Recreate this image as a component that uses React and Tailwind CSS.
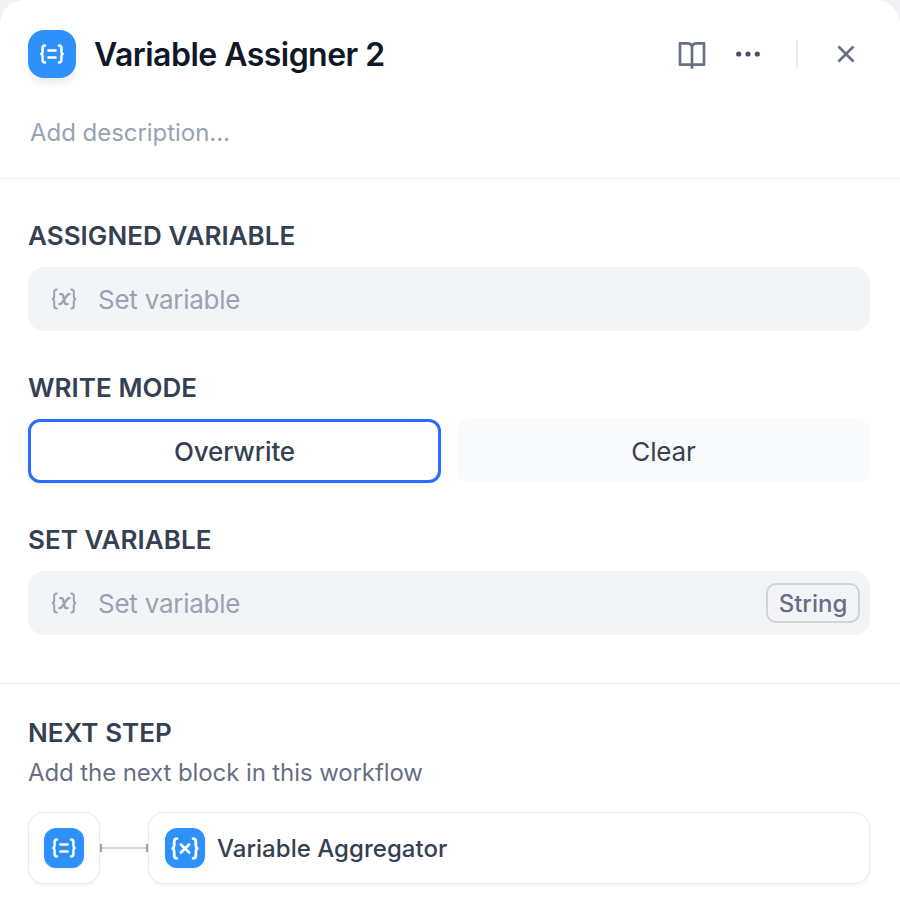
import { RiBookOpenLine, RiCloseLine } from 'react-icons/ri';

function Braces() {
  return (
    <g>
      <path d="M5 1.5C3.4 1.5 2.6 2.3 2.6 4v3.2c0 1.5-.4 2.3-1.3 2.8.9.5 1.3 1.3 1.3 2.8V16c0 1.7.8 2.5 2.4 2.5" />
      <path d="M19 1.5c1.6 0 2.4.8 2.4 2.5v3.2c0 1.5.4 2.3 1.3 2.8-.9.5-1.3 1.3-1.3 2.8V16c0 1.7-.8 2.5-2.4 2.5" />
    </g>
  );
}

function AssignIcon() {
  return (
    <svg width="24" height="20" viewBox="0 0 24 20" fill="none" stroke="#fff" strokeWidth="2.5" strokeLinecap="round" strokeLinejoin="round">
      <Braces />
      <path d="M8.4 6.6h7.2M8.4 13.4h7.2" />
    </svg>
  );
}

function AggregateIcon() {
  return (
    <svg width="28" height="23" viewBox="0 0 24 20" fill="none" stroke="#fff" strokeWidth="2.4" strokeLinecap="round" strokeLinejoin="round">
      <Braces />
      <path d="M8.4 6.5l7.2 7M15.6 6.5l-7.2 7" />
    </svg>
  );
}

function VariableIcon() {
  return (
    <svg width="26" height="22" viewBox="0 0 26 22" fill="none" stroke="#98a2b2" strokeWidth="2" strokeLinecap="round" strokeLinejoin="round">
      <path d="M5.7 1.4C3.9 1.4 3.2 2.2 3.2 3.9v4.3c0 1.5-.4 2.3-1.6 2.8 1.2.5 1.6 1.3 1.6 2.8v4.3c0 1.7.7 2.5 2.5 2.5" />
      <path d="M20.3 1.4c1.8 0 2.5.8 2.5 2.5v4.3c0 1.5.4 2.3 1.6 2.8-1.2.5-1.6 1.3-1.6 2.8v4.3c0 1.7-.7 2.5-2.5 2.5" />
      <path strokeWidth="2.3" d="M9.3 6.2h1.3c.8 0 1.2.3 1.4 1l1.9 7.9c.2.7.6 1 1.3 1h1.4M18.6 6.2h-.4c-.8 0-1.4.3-1.9.9l-5.6 8c-.5.7-1.1 1-1.9 1h-.4" />
    </svg>
  );
}

function VariableField({ type }) {
  return (
    <div className="mt-[15px] flex h-16 items-center rounded-[16px] bg-[#f2f4f8] pl-[23px] pr-[10px]">
      <VariableIcon />
      <span className="ml-[21px] pt-[2px] text-[26px] leading-8 tracking-[-0.25px] text-[#98a2b2]">Set variable</span>
      {type && (
        <span className="ml-auto flex h-10 w-[94px] items-center justify-center rounded-[10px] border-2 border-[#d0d3da] pt-[2px] text-[24px] font-medium text-[#676f83]">
          {type}
        </span>
      )}
    </div>
  );
}

function Heading({ children }) {
  return <h2 className="text-[26px] font-semibold leading-8 tracking-[0.05px] text-[#354052]">{children}</h2>;
}

export default function App() {
  return (
    <div className="h-[918px] w-[900px] overflow-hidden bg-[#f0f1f5] font-['Inter',sans-serif]">
      <main className="flex h-[940px] flex-col rounded-t-[24px] bg-white">
        <header className="h-[179px] border-b border-[#eff0f2] pt-[30px]">
          <div className="flex h-12 items-center pl-7 pr-[38px]">
            <div className="flex size-12 items-center justify-center rounded-[16px] bg-[#2e90fa] shadow-[0_6px_10px_-2px_rgba(16,24,40,0.1)]">
              <AssignIcon />
            </div>
            <h1 className="ml-[18px] whitespace-nowrap pt-[2px] text-[32px] font-semibold leading-10 tracking-[-0.53px] text-[#101828]">Variable Assigner 2</h1>
            <div className="ml-auto flex items-center">
              <RiBookOpenLine className="size-8 text-[#676f83]" />
              <svg className="ml-6" width="32" height="32" viewBox="0 0 32 32" fill="#475467">
                <circle cx="6.7" cy="16" r="2.6" />
                <circle cx="16" cy="16" r="2.6" />
                <circle cx="25.3" cy="16" r="2.6" />
              </svg>
              <div className="ml-8 h-7 w-[2px] bg-[#ebecee]" />
              <RiCloseLine className="ml-8 size-8 text-[#676f83]" />
            </div>
          </div>
          <p className="ml-[30px] mt-[39px] text-[24px] leading-8 tracking-[-0.04px] text-[#98a2b2]">Add description...</p>
        </header>

        <section className="h-[505px] border-b border-[#eff0f2] pl-7 pr-[30px] pt-[41px]">
          <Heading>ASSIGNED VARIABLE</Heading>
          <VariableField />
          <div className="mt-[41px]">
            <Heading>WRITE MODE</Heading>
            <div className="mt-[15px] grid grid-cols-2 gap-4 text-[26px] tracking-[-0.15px] text-[#354052]">
              <button className="h-16 rounded-[12px] border-3 border-[#296dff] bg-white pt-px font-medium shadow-[0_2px_4px_rgba(16,24,40,0.05)]">Overwrite</button>
              <button className="h-16 rounded-[12px] bg-[#f9fafb] pt-px">Clear</button>
            </div>
          </div>
          <div className="mt-[41px]">
            <Heading>SET VARIABLE</Heading>
            <VariableField type="String" />
          </div>
        </section>

        <section className="pl-7 pr-[30px] pt-[33px]">
          <Heading>NEXT STEP</Heading>
          <p className="mt-2 text-[24px] leading-8 tracking-[-0.1px] text-[#676f83]">Add the next block in this workflow</p>
          <div className="mt-[23px] flex items-center">
            <div className="flex size-[72px] items-center justify-center rounded-[16px] border border-[#e9eaec] bg-white shadow-[0_2px_4px_rgba(16,24,40,0.05)]">
              <div className="flex size-10 items-center justify-center rounded-[12px] bg-[#2e90fa] shadow-[0_2px_4px_rgba(16,24,40,0.06)]">
                <AssignIcon />
              </div>
            </div>
            <div className="flex w-12 items-center">
              <div className="h-2 w-[2px] bg-[#98a2b2]" />
              <div className="h-[2px] flex-1 bg-[#d0d5dc]" />
              <div className="h-2 w-[2px] bg-[#98a2b2]" />
            </div>
            <div className="flex h-[72px] flex-1 items-center rounded-[16px] border border-[#e9eaec] bg-white pl-4 shadow-[0_2px_4px_rgba(16,24,40,0.05)]">
              <div className="flex size-10 items-center justify-center rounded-[12px] bg-[#2e90fa] shadow-[0_2px_4px_rgba(16,24,40,0.06)]">
                <AggregateIcon />
              </div>
              <span className="ml-3 pt-[2px] text-[24px] font-medium tracking-[0.03px] text-[#354052]">Variable Aggregator</span>
            </div>
          </div>
        </section>
      </main>
    </div>
  );
}
